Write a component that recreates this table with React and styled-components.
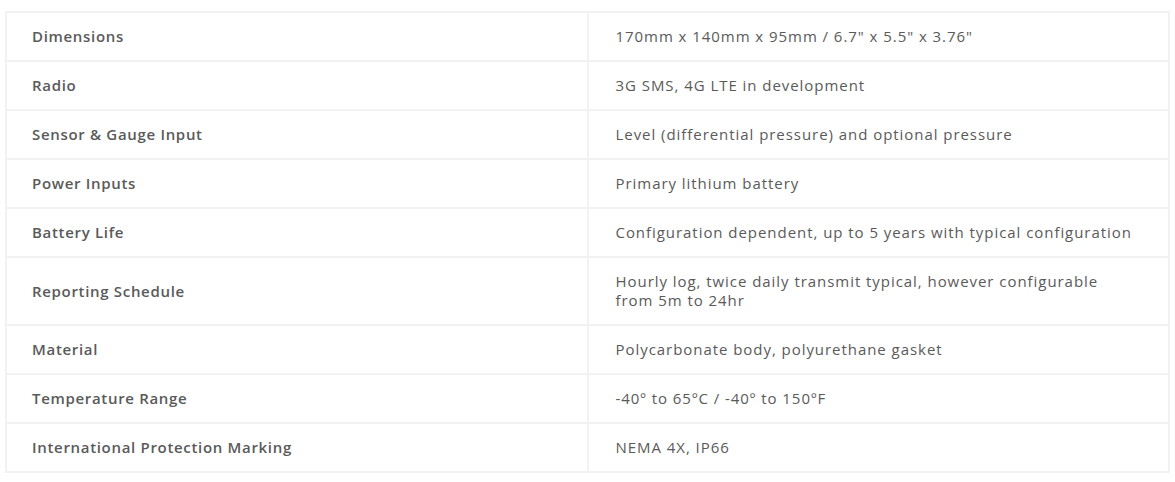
import React from 'react'
import styled, { createGlobalStyle } from 'styled-components'

const GlobalStyle = createGlobalStyle`
    body {
        margin: 0;
        background: #fff;
        font-family: "Open Sans", "Noto Sans", sans-serif;
    }
`

const Wrapper = styled.div`
    padding: 11px 5px;
`

const SpecTable = styled.table`
    width: 100%;
    border-collapse: collapse;
    border: 2px solid #f2f2f2;
`

const Label = styled.td`
    width: 50%;
    padding: 14px 25px;
    border: 2px solid #f2f2f2;
    font-size: 15px;
    line-height: 19px;
    font-weight: 600;
    letter-spacing: 0.68px;
    color: #5a5a5a;
    vertical-align: middle;
`

const Value = styled.td`
    padding: 14px 33px 14px 27px;
    border: 2px solid #f2f2f2;
    font-size: 15px;
    line-height: 19px;
    letter-spacing: 0.95px;
    color: #5a5a5a;
    vertical-align: middle;
`

const specs = [
  ['Dimensions', '170mm x 140mm x 95mm / 6.7" x 5.5" x 3.76"'],
  ['Radio', '3G SMS, 4G LTE in development'],
  ['Sensor & Gauge Input', 'Level (differential pressure) and optional pressure'],
  ['Power Inputs', 'Primary lithium battery'],
  ['Battery Life', 'Configuration dependent, up to 5 years with typical configuration'],
  ['Reporting Schedule', 'Hourly log, twice daily transmit typical, however configurable from 5m to 24hr'],
  ['Material', 'Polycarbonate body, polyurethane gasket'],
  ['Temperature Range', '-40º to 65ºC / -40º to 150ºF'],
  ['International Protection Marking', 'NEMA 4X, IP66'],
]

const App = () => {
  return (
      <Wrapper>
          <GlobalStyle />
          <SpecTable>
              <tbody>
                  {specs.map(([label, value]) => (
                      <tr key={label}>
                          <Label>{label}</Label>
                          <Value>{value}</Value>
                      </tr>
                  ))}
              </tbody>
          </SpecTable>
      </Wrapper>
  )
}

export default App
